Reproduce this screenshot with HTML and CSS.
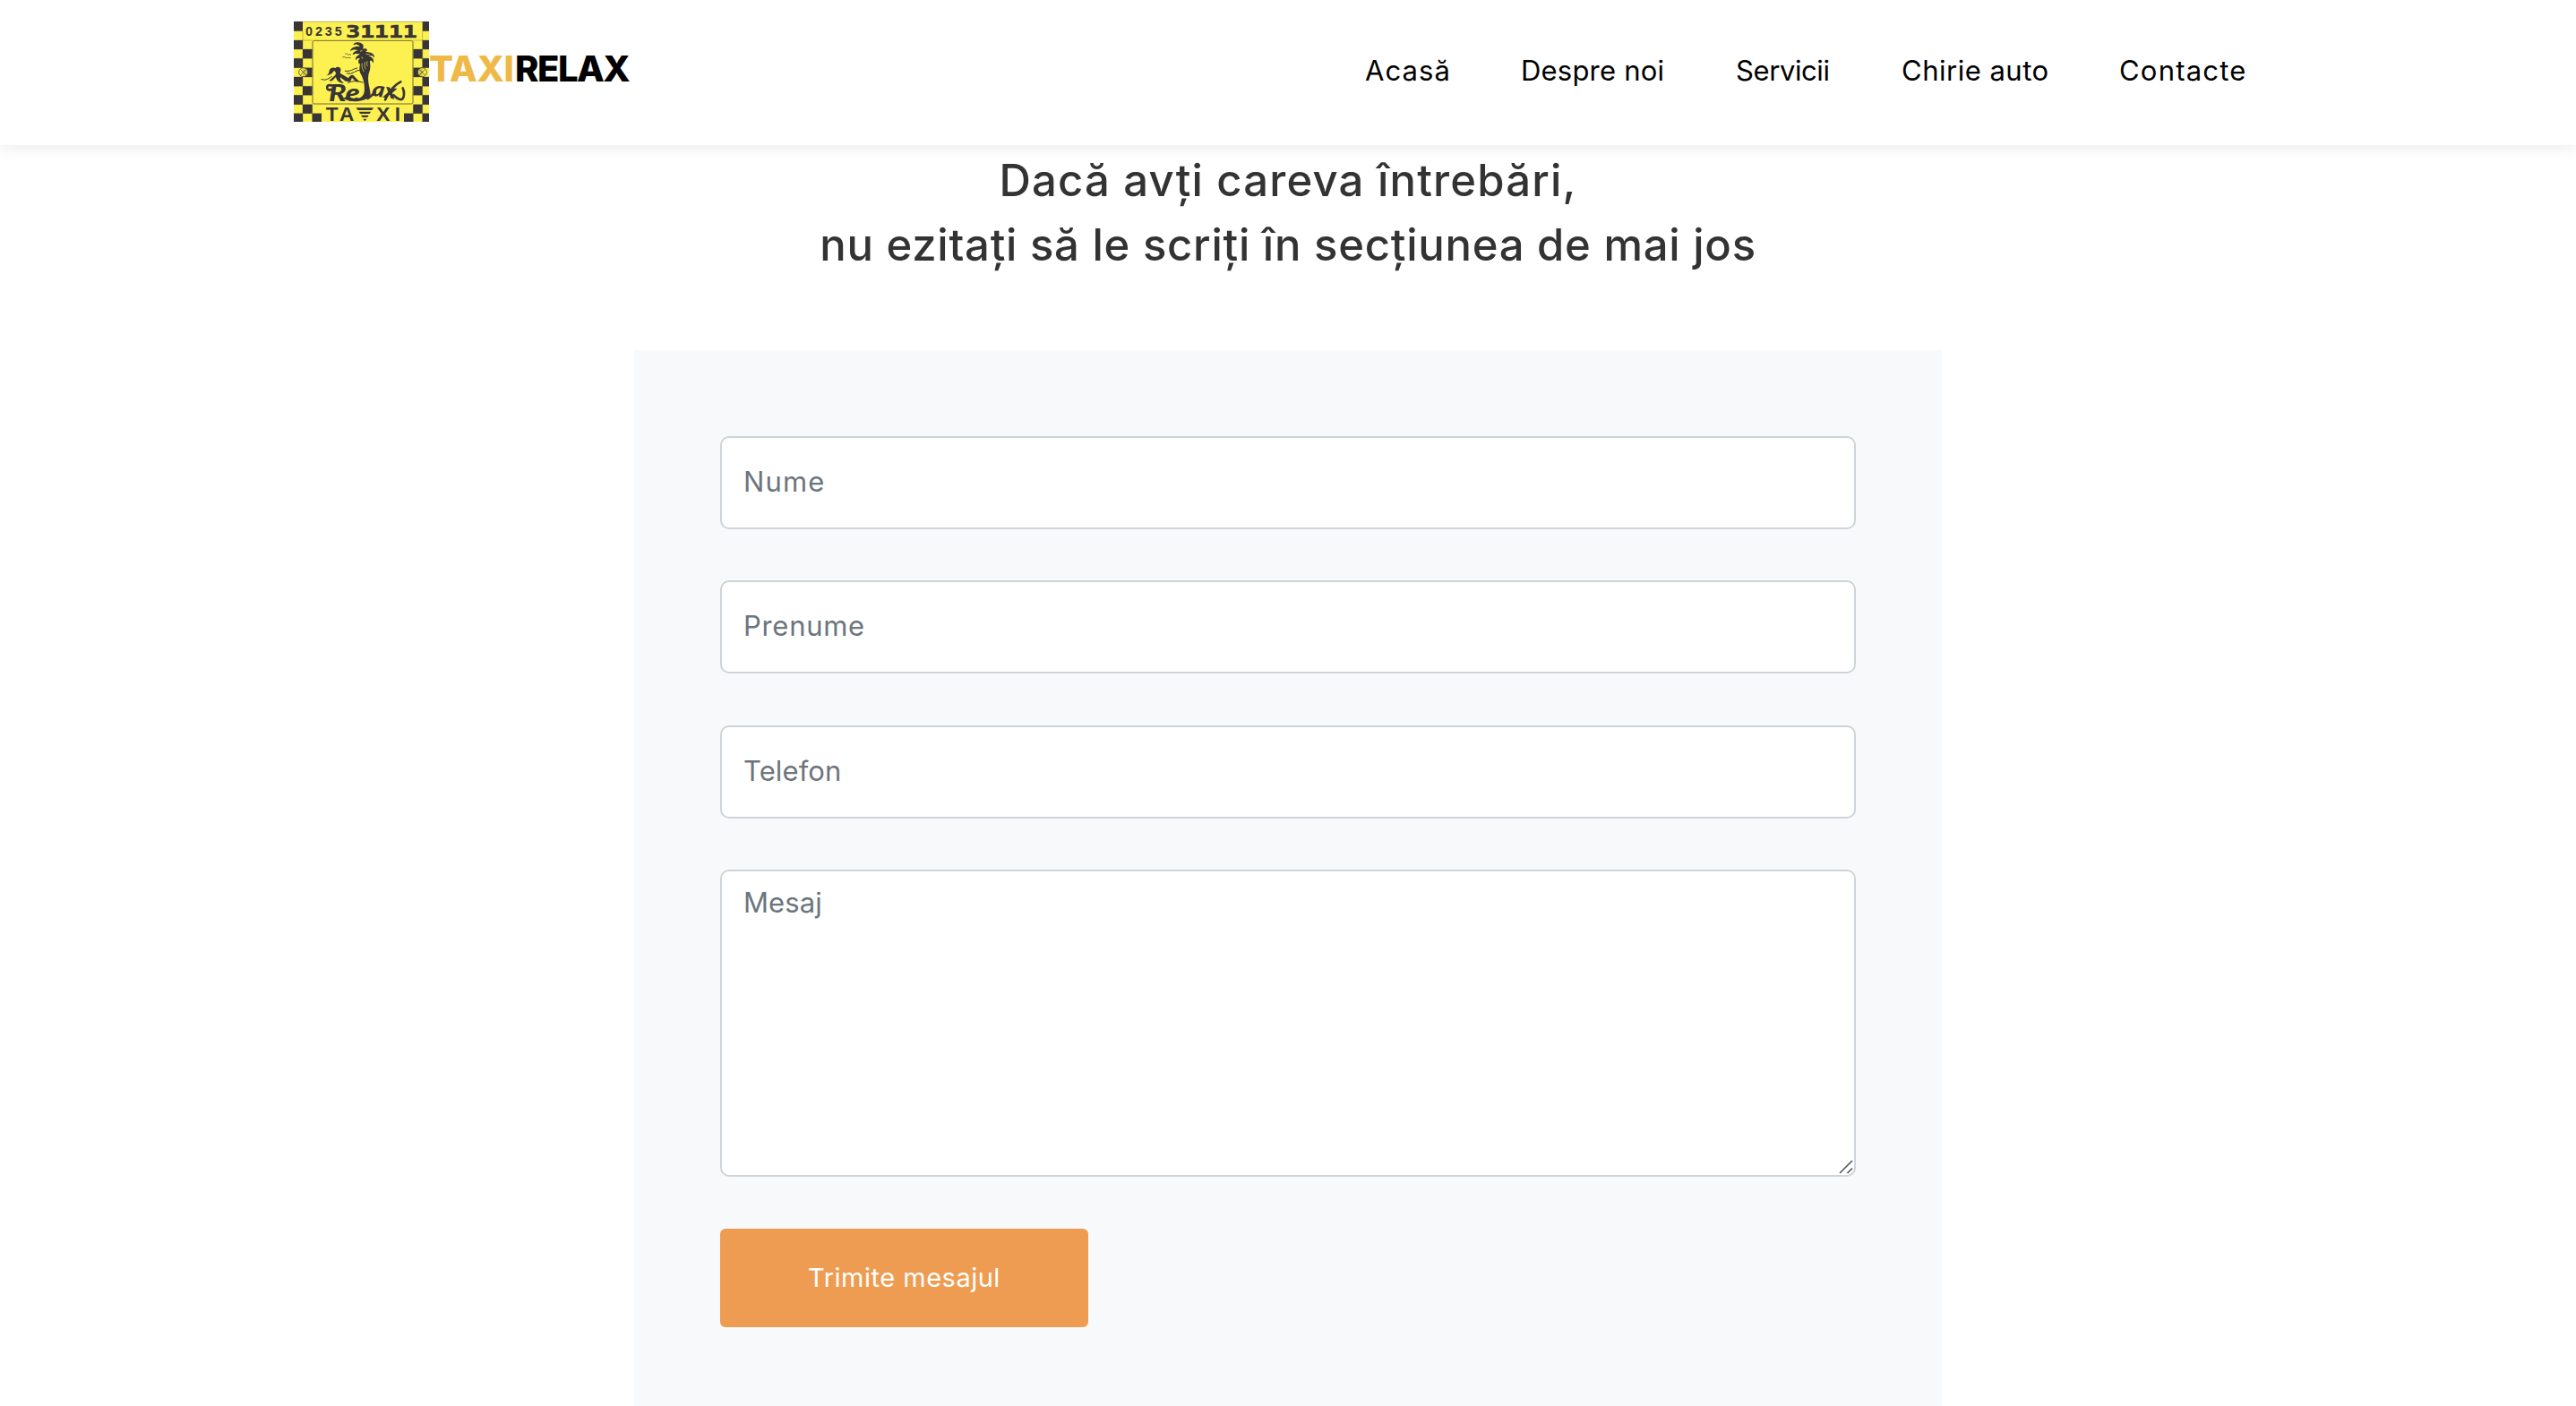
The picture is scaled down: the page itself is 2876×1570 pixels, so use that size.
FILE: index.html
```html
<!DOCTYPE html>
<html lang="ro">
<head>
<meta charset="utf-8">
<title>Taxi Relax</title>
<link rel="stylesheet" href="styles.css">
</head>
<body>
<header class="header">
  <a class="brand">
    <svg class="logo" viewBox="24 24 453 336" preserveAspectRatio="none">
      <rect x="24" y="24" width="453" height="336" fill="#fcf151"/>
      <path class="grid" d="M24 25H477M54 57V360M455 57V360M86 302V360M424 302V360M24 87H86M24 117H86M24 148H86M24 179H86M24 210H86M24 241H86M24 271H86M24 302H86M24 332H117M424 87H477M424 117H477M424 148H477M424 179H477M424 210H477M424 241H477M424 271H477M424 302H477M393 332H477"/>
      <path class="ink" d="M24 24h30v32H24zM24 87h30v30H24zM24 148h30v31H24zM24 210h30v31H24zM24 271h30v31H24zM24 332h30v28H24zM54 117h32v31H54zM54 179h32v31H54zM54 241h32v30H54zM54 302h32v30H54zM86 332h31v28H86zM455 24h22v32h-22zM455 87h22v30h-22zM455 148h22v31h-22zM455 210h22v31h-22zM455 271h22v31h-22zM455 332h22v28h-22zM424 117h31v31h-31zM424 179h31v31h-31zM424 241h31v30h-31zM424 302h31v30h-31zM393 332h31v28h-31z"/>
      <rect x="87" y="88" width="336" height="212" rx="5" fill="#fcf151" stroke="#706a35" stroke-width="3"/>
      <g fill="#fcf151" fill-opacity=".8" stroke="#4b4734" stroke-width="2.5"><circle cx="56" cy="194" r="15"/><circle cx="454" cy="194" r="15"/><path d="M47 185l18 18M65 185l-18 18M445 185l18 18M463 185l-18 18"/></g>
      <text class="ink digits" x="63" y="73" font-size="43" textLength="122">0235</text>
      <text class="ink mono" x="199" y="79" font-size="60" textLength="238" lengthAdjust="spacingAndGlyphs">31111</text>
      <text class="ink digits" x="131" y="356" font-size="68" textLength="95">TA</text>
      <text class="ink digits" x="301" y="356" font-size="68" textLength="80">XI</text>
      <path class="ink" d="M233 313h58l-5 8h-48zM242 326h40l-4 7h-32zM249 338h26l-4 7h-18zM256 350h12l-6 8z"/>
      <!-- palm: trunk and crown -->
      <path class="ink" d="M246 166C243 182 243 191 249 201C261 224 262 246 260 260C257 273 249 280 238 281C222 283 212 277 200 275L190 282C208 291 224 293 240 291C262 289 277 281 281 268C280 247 269 226 275 198C281 187 281 174 279 160C280 151 286 154 290 164C295 152 287 143 274 139C288 136 293 142 293 148C298 134 284 126 264 126C277 119 266 112 255 116C263 103 250 94 239 94C229 94 223 99 224 103C234 98 241 102 246 108C236 106 216 109 213 123C224 117 234 118 239 121C228 123 221 130 221 136C229 130 241 132 246 134C234 137 229 147 232 154C236 147 241 146 246 148C239 153 240 158 241 164Z"/>
      <path d="M253 164c-3 10 0 18 6 28M263 160c-3 9-2 17 2 24M270 157c-2 7-1 12 1 17M254 121l-8 3M266 133l12 1M251 142l4 7" stroke="#fcf151" stroke-width="2" fill="none"/>
      <!-- birds -->
      <path class="line" d="M188 143q8-3 13 4q4-4 13-1M197 132q7-2 10 4q3-2 8-1" stroke-width="2"/>
      <!-- reclining figure and waves -->
      <path class="ink" d="M133 205C140 200 143 196 143 188C146 180 154 176 164 180C166 175 179 174 181 183C183 190 178 193 180 198L196 207L207 214C211 206 218 201 224 205L244 226H232L219 213L213 226L197 224L180 211C178 218 183 225 192 231C175 231 166 219 165 210L153 222C145 226 139 221 146 219L163 203C167 198 164 190 158 190C153 199 145 204 133 205Z"/>
      <path class="line" d="M117 218q12 4 20-1q9-5 14-9M196 190q12 2 22-3q8-5 18-7M202 198q14 3 24-4q7-6 18-7M205 229q24-10 50-1" stroke-width="3"/>
      <text class="ink script" x="141" y="291" font-size="78" textLength="104" lengthAdjust="spacingAndGlyphs">Re</text>
      <text class="ink script" x="284" y="272" font-size="70" transform="rotate(9 284 272)" textLength="80" lengthAdjust="spacingAndGlyphs">ax</text>
      <path class="line" d="M150 238q-17-3-14 10q3 8 13 4M272 282q12-8 25-22M330 286q22-46 52-60M358 271q32 30 35-2q1-12-4-22" stroke-width="8"/>
    </svg>
    <span class="brand-name"><span class="brand-accent">TAXI</span><span class="brand-rest">RELAX</span></span>
  </a>
  <nav class="nav">
    <a class="home">Acasă</a>
    <a class="about">Despre noi</a>
    <a class="services">Servicii</a>
    <a class="rental">Chirie auto</a>
    <a class="contact">Contacte</a>
  </nav>
</header>
<main class="main">
  <h1 class="title"><span class="title-first">Dacă avți careva întrebări,</span><br><span class="title-second">nu ezitați să le scriți în secțiunea de mai jos</span></h1>
  <form class="form">
    <input class="field name" type="text" placeholder="Nume">
    <input class="field surname" type="text" placeholder="Prenume">
    <input class="field phone" type="text" placeholder="Telefon">
    <div class="message-box">
      <textarea class="field message" placeholder="Mesaj"></textarea>
      <svg class="grip" viewBox="0 0 16 16"><path d="M1 15L15 1M9.500 15L15 9.500"/></svg>
    </div>
    <button class="submit" type="button">Trimite mesajul</button>
  </form>
</main>
</body>
</html>
```
FILE: styles.css
```css
* { box-sizing: border-box; }
body { margin: 0; height: 1570px; overflow: hidden; background: #fff; font-family: Inter, "Noto Sans", sans-serif; }

.header { position: relative; display: flex; justify-content: space-between; align-items: flex-start; height: 162px; padding: 24px 368px 0 328px; background: #fff; box-shadow: 0 4px 16px rgba(0, 0, 0, .07); }
.brand { display: flex; align-items: flex-start; }
.logo { display: block; width: 151px; height: 112px; overflow: visible; }
.ink { fill: #393536; }
.grid { fill: none; stroke: #a39c3f; stroke-width: 2; }
.line { fill: none; stroke: #393536; stroke-linecap: round; }
.digits { font-family: "Liberation Sans", sans-serif; font-weight: 700; }
.mono { font-family: "DejaVu Sans Mono", monospace; font-weight: 700; stroke: #393536; stroke-width: 2; }
.script { font-family: Lato, sans-serif; font-style: italic; font-weight: 900; }
.brand-name { padding-top: 23px; font-size: 40px; line-height: 60px; font-weight: 800; color: #000; }
.brand-name span { display: inline-block; white-space: nowrap; }
.brand-accent { width: 96px; color: #eeb947; letter-spacing: -.4px; }
.brand-rest { letter-spacing: -1.5px; }

.nav { display: flex; gap: 80px; padding-top: 33px; font-size: 31px; line-height: 44px; color: #000; white-space: nowrap; }
.home { width: 94px; letter-spacing: 1.1px; }
.about { width: 160px; letter-spacing: .2px; }
.services { width: 105px; letter-spacing: -.4px; }
.rental { width: 163px; letter-spacing: .5px; }
.contact { width: 142px; letter-spacing: 1.2px; }

.title { height: 229px; margin: 0; padding-top: 4px; text-align: center; color: #333; font-size: 49px; line-height: 72px; font-weight: 500; }
.title-first { letter-spacing: 1.2px; }
.title-second { letter-spacing: .75px; }

.form { display: flex; flex-direction: column; width: 1460px; height: 1179px; margin: 0 auto; padding: 96px 96px 0; background: #f8f9fb; }
.field { display: block; flex: none; width: 100%; height: 104px; margin: 0 0 57px; padding: 0 24px 3px; border: 2px solid #ced4da; border-radius: 10px; background: #fff; font: 31px Inter, "Noto Sans", sans-serif; }
.field::placeholder { color: #6c757d; opacity: 1; }
.name { letter-spacing: 1.1px; }
.surname { margin-bottom: 58px; letter-spacing: .7px; }
.phone { letter-spacing: .1px; }
.message-box { position: relative; flex: none; margin-bottom: 58px; }
.message { height: 343px; margin: 0; padding-top: 12px; line-height: 45px; letter-spacing: .1px; resize: none; }
.grip { position: absolute; right: 3px; bottom: 3px; width: 16px; height: 16px; fill: none; stroke: #555; stroke-width: 1.6; }
.submit { flex: none; width: 411px; height: 110px; padding: 0 0 2px; border: 0; border-radius: 6px; background: #ee9c51; color: #fff; font: 29px Inter, "Noto Sans", sans-serif; letter-spacing: .5px; }
```
